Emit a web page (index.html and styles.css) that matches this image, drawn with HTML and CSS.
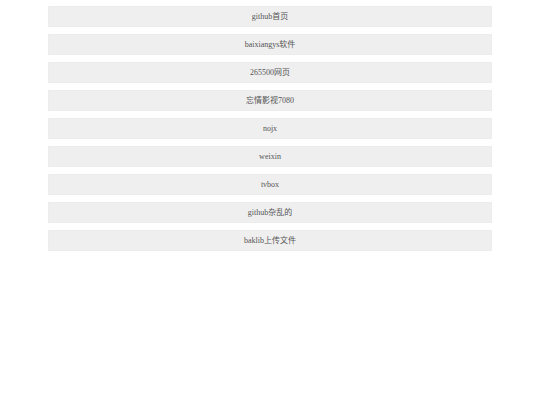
FILE: index.html
```html
<!DOCTYPE html>
<html>
<head>
<meta charset="utf-8">
<link rel="stylesheet" href="styles.css">
</head>
<body>
<div class="list">
  <a class="item">github首页</a>
  <a class="item">baixiangys软件</a>
  <a class="item">265500网页</a>
  <a class="item">忘情影视7080</a>
  <a class="item">nojx</a>
  <a class="item">weixin</a>
  <a class="item">tvbox</a>
  <a class="item">github杂乱的</a>
  <a class="item">baklib上传文件</a>
</div>
</body>
</html>
```
FILE: styles.css
```css
html, body {
  margin: 0;
  padding: 0;
  background: #ffffff;
}
.list {
  display: flex;
  flex-direction: column;
  gap: 7px;
  padding: 6px 48px;
}
.item {
  display: block;
  height: 21px;
  line-height: 19px;
  background: #efefef;
  border: 1px solid #ececec;
  box-sizing: border-box;
  text-align: center;
  font-family: "Liberation Serif", "Noto Sans CJK SC", serif;
  font-size: 8px;
  color: #555;
  text-decoration: none;
  -webkit-font-smoothing: antialiased;
}
```
